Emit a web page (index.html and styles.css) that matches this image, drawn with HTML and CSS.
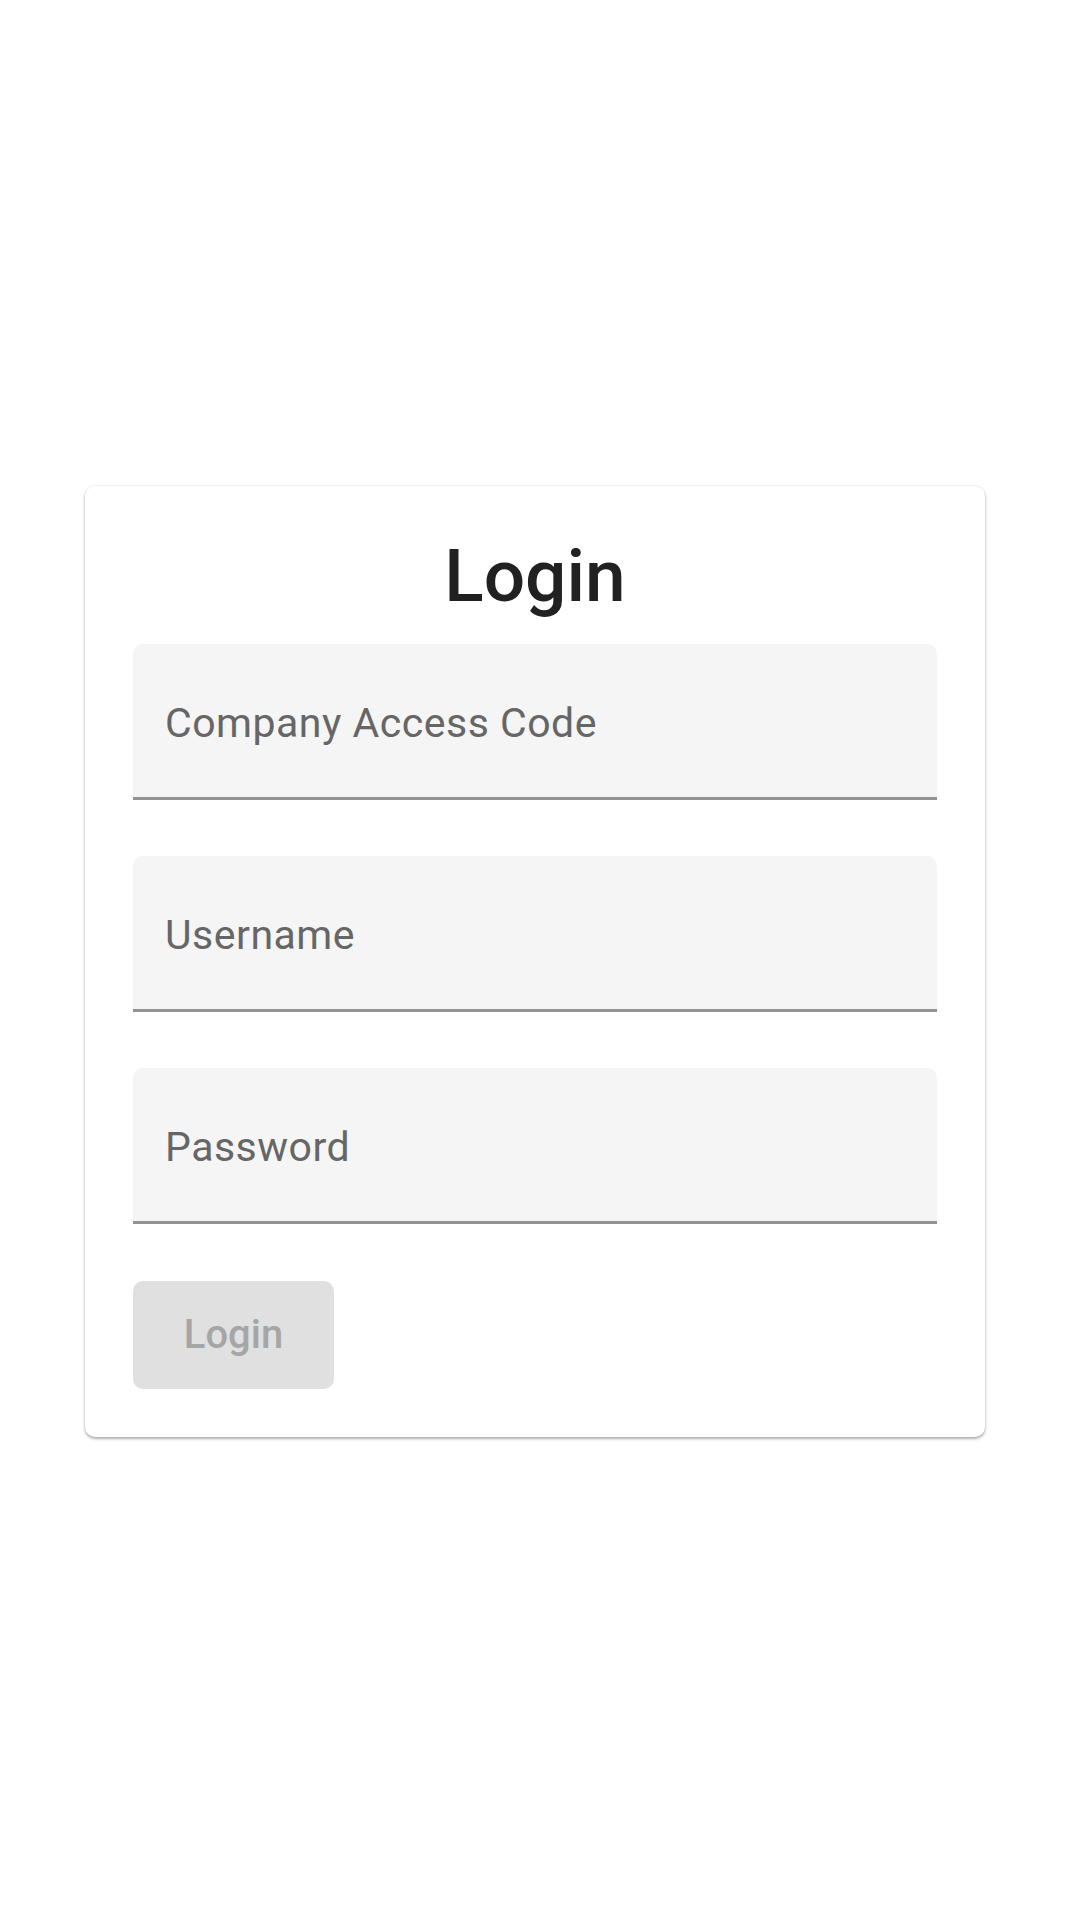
FILE: index.html
```html
<!DOCTYPE html>
<html lang="en">
<head>
<meta charset="utf-8">
<title>Login</title>
<link rel="stylesheet" href="styles.css">
</head>
<body>
<main class="page">
  <form class="card">
    <h1 class="title">Login</h1>
    <div class="fields">
      <label class="field"><span class="label">Company Access Code</span></label>
      <label class="field"><span class="label">Username</span></label>
      <label class="field"><span class="label">Password</span></label>
      <button type="button" class="btn" disabled>Login</button>
    </div>
  </form>
</main>
</body>
</html>
```
FILE: styles.css
```css
* { box-sizing: border-box; }
html, body { margin: 0; padding: 0; background: #ffffff; }
body { font-family: Roboto, "Noto Sans", Arial, sans-serif; }
.page {
  min-height: 100vh;
  display: flex;
  align-items: center;
  padding-left: 85px;
}
.card {
  width: 900px;
  background: #ffffff;
  border-radius: 10px;
  padding: 48px;
  box-shadow: 0 2px 3px rgba(0,0,0,0.3), 0 0 3px rgba(0,0,0,0.10);
}
.title {
  margin: 0 0 24px;
  text-align: center;
  font-size: 73px;
  line-height: 85.5px;
  font-weight: 500;
  color: #212121;
}
.fields {
  display: flex;
  flex-direction: column;
  align-items: flex-start;
  gap: 56px;
}
.field {
  display: block;
  width: 100%;
  height: 156px;
  background: #f5f5f5;
  border-radius: 10px 10px 0 0;
  border-bottom: 3px solid #929292;
  padding: 56px 0 0 32px;
}
.label {
  display: block;
  font-size: 41px;
  line-height: 47px;
  letter-spacing: 0.5px;
  color: #666666;
}
.btn {
  width: 201px;
  height: 108px;
  margin-top: 1px;
  border: 0;
  border-radius: 10px;
  background: #e0e0e0;
  color: #a6a6a6;
  font-family: inherit;
  font-size: 40px;
  line-height: 47px;
  font-weight: 500;
  padding: 0;
}
```
